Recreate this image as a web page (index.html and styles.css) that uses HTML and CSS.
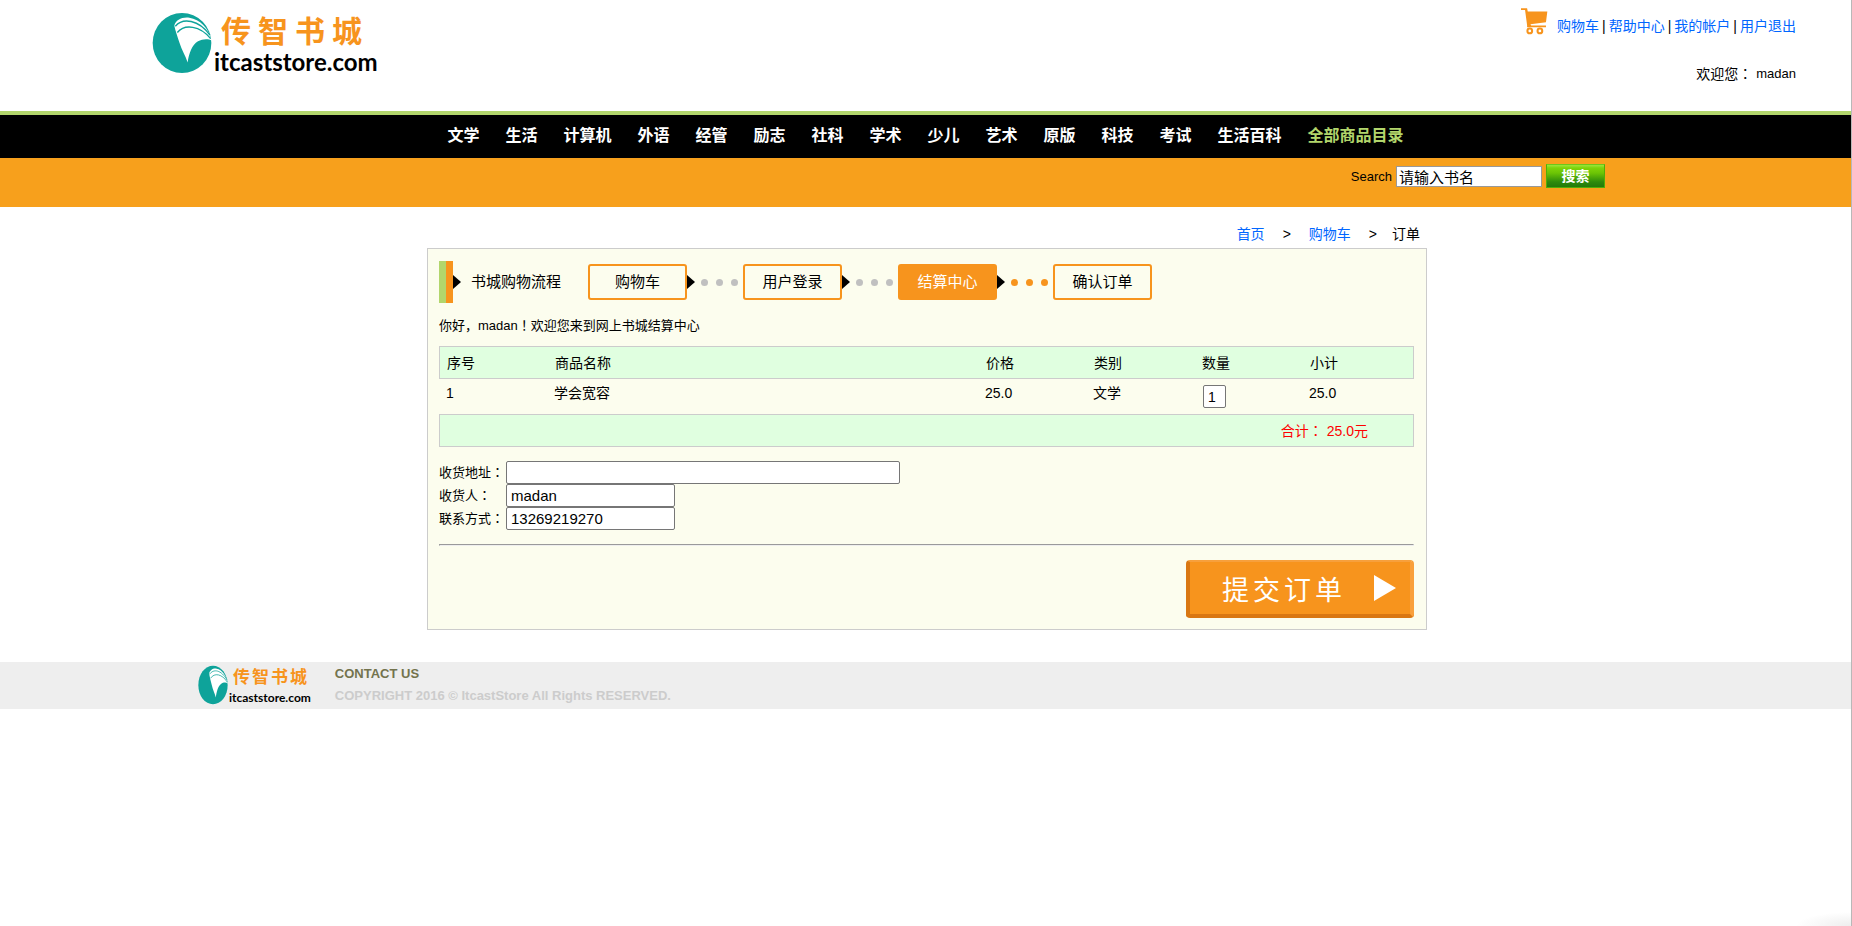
FILE: index.html
```html
<!DOCTYPE html>
<html lang="zh-CN">
<head>
<meta charset="utf-8">
<title>传智书城 - 结算中心</title>
<link rel="stylesheet" href="styles.css">
</head>
<body>
<svg class="defs" width="0" height="0" aria-hidden="true">
  <symbol id="mark" viewBox="36 38 180 182" preserveAspectRatio="none">
    <circle cx="126" cy="129" r="88" fill="#0ea39a"/>
    <path d="M103 78C107 62 126 52 148 55C180 60 205 84 215 122C206 116 188 116 174 124C156 134 147 160 143 186C136 166 124 148 119 130C113 112 106 92 103 78Z" fill="#fff"/>
    <path d="M106 80C128 54 176 60 210 106M112 98C134 72 180 78 212 116" fill="none" stroke="#0ea39a" stroke-width="4"/>
  </symbol>
</svg>

<header class="header">
  <a class="logo" href="#" aria-label="传智书城 itcaststore.com">
    <svg width="60" height="62"><use href="#mark" width="60" height="62"/></svg>
    <span class="logo-text">
      <span class="logo-name"><span>传</span><span>智</span><span>书</span><span>城</span></span>
      <span class="logo-url">itcaststore.com</span>
    </span>
  </a>
  <div class="account">
    <div class="account-links">
      <svg class="cart" width="27" height="27" viewBox="0 0 80 80" aria-hidden="true">
        <path d="M0 1H18L20 10H78L74 42L28 48L30 52H74V57H18V50L12 6H0Z" fill="#f7941d"/>
        <circle cx="26" cy="68" r="7" fill="none" stroke="#f7941d" stroke-width="6"/>
        <circle cx="56" cy="68" r="7" fill="none" stroke="#f7941d" stroke-width="6"/>
      </svg>
      <a href="#">购物车</a><span>|</span><a href="#">帮助中心</a><span>|</span><a href="#">我的帐户</a><span>|</span><a href="#">用户退出</a>
    </div>
    <div class="welcome"><span class="han">欢迎您<span class="punct" lang="zh-Hant">：</span></span><span>madan</span></div>
  </div>
</header>

<nav class="nav">
  <a href="#">文学</a><a href="#">生活</a><a href="#">计算机</a><a href="#">外语</a><a href="#">经管</a><a href="#">励志</a><a href="#">社科</a><a href="#">学术</a><a href="#">少儿</a><a href="#">艺术</a><a href="#">原版</a><a href="#">科技</a><a href="#">考试</a><a href="#">生活百科</a><a class="all" href="#">全部商品目录</a>
</nav>

<form class="search">
  <label for="q">Search</label>
  <input id="q" type="text" value="请输入书名">
  <button type="button">搜索</button>
</form>

<main class="main">
  <div class="crumbs"><a href="#">首页</a><span>&gt;</span><a href="#">购物车</a><span>&gt;</span><span class="here">订单</span></div>
  <section class="panel">
    <div class="steps">
      <span class="stripe"></span><span class="arrow"></span>
      <span class="steps-title">书城购物流程</span>
      <span class="step">购物车</span>
      <span class="arrow"></span><span class="dots"><i></i><i></i><i></i></span>
      <span class="step">用户登录</span>
      <span class="arrow"></span><span class="dots"><i></i><i></i><i></i></span>
      <span class="step active">结算中心</span>
      <span class="arrow"></span><span class="dots hot"><i></i><i></i><i></i></span>
      <span class="step">确认订单</span>
    </div>
    <p class="greeting">你好，madan<span class="punct" lang="zh-Hant">！</span>欢迎您来到网上书城结算中心</p>
    <table class="cart-table">
      <colgroup><col class="c"><col class="name"><col class="c"><col class="c"><col class="c"><col></colgroup>
      <thead><tr><th>序号</th><th>商品名称</th><th>价格</th><th>类别</th><th>数量</th><th>小计</th></tr></thead>
      <tbody><tr><td>1</td><td>学会宽容</td><td>25.0</td><td>文学</td><td><input class="qty" type="text" value="1" aria-label="数量"></td><td>25.0</td></tr></tbody>
      <tfoot><tr><td colspan="6"><span class="total">合计<span class="punct" lang="zh-Hant">：</span></span><span class="total">25.0元</span></td></tr></tfoot>
    </table>
    <form>
      <div class="field"><label for="addr">收货地址<span class="punct" lang="zh-Hant">：</span></label><input id="addr" class="wide" type="text"></div>
      <div class="field"><label for="who">收货人<span class="punct" lang="zh-Hant">：</span></label><input id="who" type="text" value="madan"></div>
      <div class="field"><label for="tel">联系方式<span class="punct" lang="zh-Hant">：</span></label><input id="tel" type="text" value="13269219270"></div>
      <hr>
      <div class="actions">
        <button class="submit" type="button">
          <span>提</span><span>交</span><span>订</span><span>单</span>
          <svg width="22" height="26" viewBox="0 0 22 26" aria-hidden="true"><path d="M0 0L22 13L0 26Z" fill="#fff"/></svg>
        </button>
      </div>
    </form>
  </section>
</main>

<footer class="footer">
  <a class="logo small" href="#" aria-label="传智书城 itcaststore.com">
    <svg width="30" height="40"><use href="#mark" width="30" height="40"/></svg>
    <span class="logo-text">
      <span class="logo-name"><span>传</span><span>智</span><span>书</span><span>城</span></span>
      <span class="logo-url">itcaststore.com</span>
    </span>
  </a>
  <div class="legal">
    <a href="#">CONTACT US</a>
    <span>COPYRIGHT 2016 © ItcastStore All Rights RESERVED.</span>
  </div>
</footer>
</body>
</html>
```
FILE: styles.css
```css
* { box-sizing: border-box; }
body {
  margin: 0;
  min-height: 100vh;
  border-right: 1px solid #b8b8b8;
  background: radial-gradient(ellipse 56px 14px at 100% 100%, #ededed, #fff) no-repeat right bottom / 60px 14px #fff;
  color: #000;
  font: 13px/20px "Liberation Sans", "Noto Sans CJK SC", sans-serif;
}
a { color: #06f; text-decoration: none; }
input, button { font-family: inherit; color: #000; }
.defs { display: block; height: 0; }
/* centred full-width punctuation */
.punct { font-family: "Noto Sans CJK TC", sans-serif; line-height: 1; }
.han { font-size: 14px; }

.header {
  display: flex;
  justify-content: space-between;
  align-items: flex-start;
  height: 111px;
  padding: 0 55px 0 152px;
}
.logo { display: flex; gap: 2px; padding-top: 12px; color: #000; }
.logo-text { display: flex; flex-direction: column; }
.logo-name {
  display: flex;
  gap: 7px;
  padding-left: 7px;
  color: #f7941d;
  font-size: 30px;
  line-height: 40px;
  font-weight: 700;
}
.logo-url { font: 700 24px/20px Lato, sans-serif; }

.account { display: flex; flex-direction: column; align-items: flex-end; gap: 28px; padding-top: 8px; }
.account-links { display: flex; align-items: flex-end; gap: 3px; font-size: 14px; line-height: 20px; }
.cart { margin: 0 6px 1px 0; }
.welcome { display: flex; gap: 4px; }

.nav {
  display: flex;
  justify-content: center;
  gap: 26px;
  height: 47px;
  border-top: 4px solid #b2d66c;
  background: #000;
  font-size: 16px;
  line-height: 42px;
  font-weight: 700;
}
.nav a { color: #fff; }
.nav .all { color: #b2d66c; }

.search {
  display: flex;
  align-items: flex-start;
  gap: 4px;
  height: 49px;
  padding: 6px 246px 0 0;
  justify-content: flex-end;
  background: #f7a01c;
}
.search label { line-height: 26px; }
.search input {
  width: 146px;
  height: 21px;
  margin-top: 2px;
  padding: 0 2px;
  border: 1px solid #999;
  background: #fff;
  font-size: 15px;
}
.search button {
  width: 59px;
  height: 24px;
  padding: 0;
  border: 1px solid #4fae08;
  border-top-color: #6cc81a;
  background: linear-gradient(#9be63c 0, #7ed30a 3px, #6cc405 8px, #2c8a0c 17px, #247a0a);
  color: #fff;
  font-size: 14px;
  font-weight: 700;
  line-height: 20px;
}

.main { width: 1003px; max-width: 100%; margin: 0 auto; padding: 17px 0 0 3px; }
.crumbs { display: flex; justify-content: flex-end; gap: 18px; padding: 0 7px 4px; font-size: 14px; }
.crumbs .here { margin-left: -3px; }
.panel { padding: 12px 12px 11px 11px; border: 1px solid #ccc; background: #fcfdee; }

.steps { display: flex; align-items: center; height: 42px; font-size: 15px; }
.stripe { width: 14px; height: 42px; background: linear-gradient(90deg, #b2d66c 50%, #f7941d 50%); }
.arrow { border: solid transparent; border-width: 7px 0 7px 8px; border-left-color: #000; }
.steps-title { margin: 0 27px 0 10px; }
.step {
  width: 99px;
  height: 36px;
  border: 2px solid #f7941d;
  border-radius: 3px;
  line-height: 31px;
  text-align: center;
}
.step.active { background: #f7941d; color: #fff; }
.dots { display: flex; gap: 8px; width: 48px; padding-left: 6px; }
.dots i { width: 7px; height: 7px; border-radius: 50%; background: #c0c0c0; }
.dots.hot i { background: #f7941d; }

.greeting { height: 20px; margin: 13px 0 10px; }

.cart-table { width: 100%; border-spacing: 0; table-layout: fixed; font-size: 14px; }
.cart-table .c { width: 108px; }
.cart-table .name { width: 431px; }
.cart-table th { padding: 0 8px; height: 33px; font-weight: 400; text-align: left; }
.cart-table th, tfoot td { background: #e0ffe0; border: solid #ccc; border-width: 1px 0; }
.cart-table th:first-child, tfoot td:first-child { border-left-width: 1px; padding-left: 7px; }
.cart-table th:last-child, tfoot td:last-child { border-right-width: 1px; }
tbody td { height: 35px; padding: 4px 7px 0; vertical-align: top; }
.qty { display: block; width: 23px; height: 23px; margin: 2px 0 0 2px; padding: 0 4px; border: 1px solid #767676; border-radius: 2px; font-size: 14px; }
tfoot td { height: 33px; padding: 0 45px; text-align: right; color: #f00; }
.total + .total { margin-left: 4px; }

.cart-table + form { margin-top: 14px; }
.field { display: flex; align-items: center; }
.field label { width: 67px; white-space: nowrap; }
.field input {
  width: 169px;
  height: 23px;
  padding: 0 4px;
  border: 1px solid #767676;
  border-radius: 2px;
  background: #fff;
  font-size: 15px;
}
.field .wide { width: 394px; }
hr { margin: 14px 0; border: 1px solid; border-color: #9a9a9a #eee #eee #9a9a9a; }
.actions { display: flex; justify-content: flex-end; }
.submit {
  display: flex;
  align-items: center;
  gap: 4px;
  height: 58px;
  padding: 0 14px 0 32px;
  border: solid;
  border-width: 2px 4px 4px;
  border-color: #f7a03c #f9a03c #d97712 #d97712;
  border-radius: 4px;
  background: #f7941d;
  color: #fff;
  font-size: 27px;
  font-weight: 400;
}
.submit svg { margin-left: 28px; }

.footer {
  display: flex;
  gap: 24px;
  height: 47px;
  margin-top: 32px;
  padding-left: 198px;
  background: #eee;
}
.small { gap: 1px; padding-top: 3px; }
.small .logo-name { gap: 2px; padding-left: 4px; font-size: 17px; line-height: 26px; font-weight: 700; }
.small .logo-url { font-size: 12px; line-height: 14px; }
.legal { display: flex; flex-direction: column; gap: 2px; padding-top: 2px; color: #ccc; font-weight: 700; }
.legal a { color: #73734d; }
```
